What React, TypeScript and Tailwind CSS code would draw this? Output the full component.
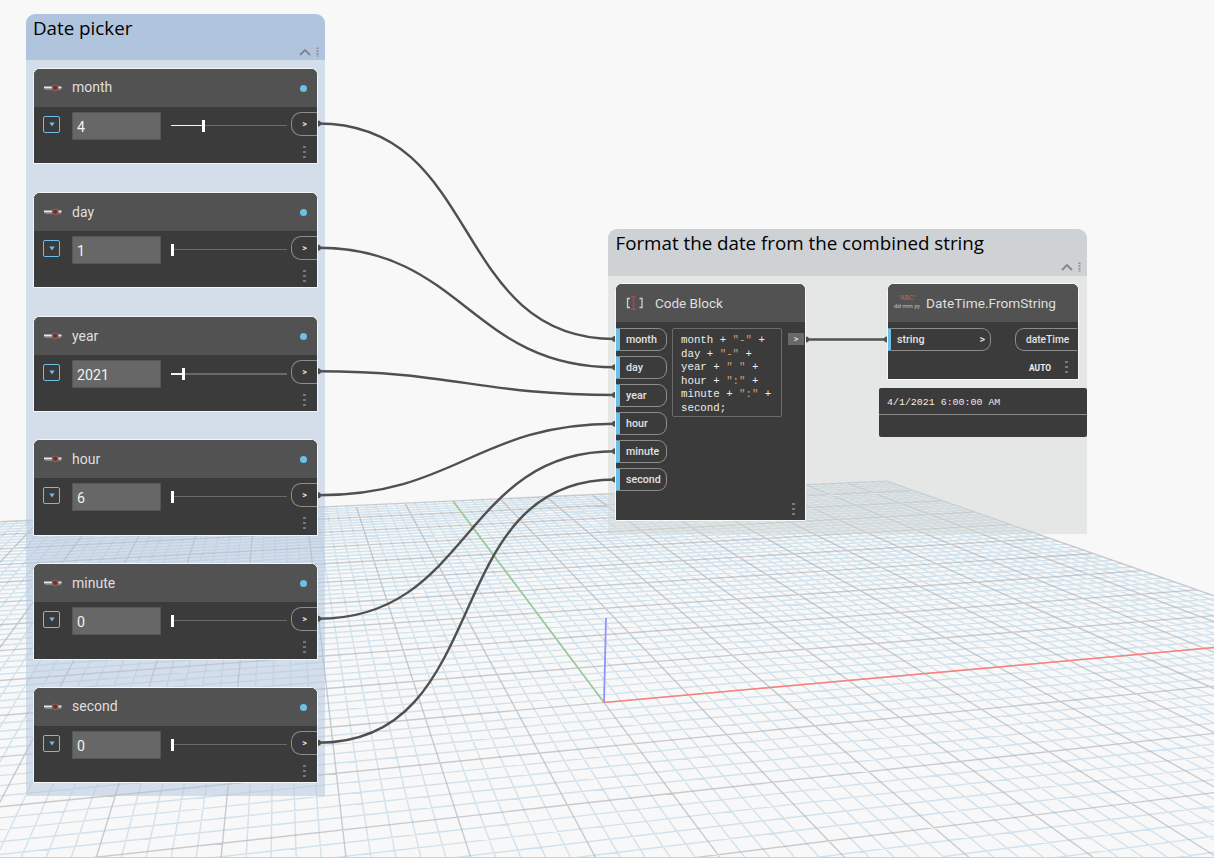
import React from "react";

type Pt = [number, number];

const depth = (u: number, v: number) => 1 + 0.0182 * u + 0.0865 * v;

const project = (u: number, v: number): Pt => {
  const w = depth(u, v);
  return [604 + (86 * u - 28.16 * v) / w, 702.5 + (-7.74 * u - 37.58 * v) / w];
};

const NEAR = 0.25;

function segment(a: Pt, b: Pt): string {
  const wa = depth(a[0], a[1]);
  const wb = depth(b[0], b[1]);
  if (wa < NEAR && wb < NEAR) return "";
  let start = a;
  if (wa < NEAR) {
    const t = (NEAR - wa) / (wb - wa);
    start = [a[0] + (b[0] - a[0]) * t, a[1] + (b[1] - a[1]) * t];
  }
  const p = project(start[0], start[1]);
  const q = project(b[0], b[1]);
  return `M${p[0].toFixed(1)} ${p[1].toFixed(1)}L${q[0].toFixed(1)} ${q[1].toFixed(1)}`;
}

function gridPath(major: boolean): string {
  let d = "";
  for (let i = -50; i <= 50; i++) {
    if ((i % 5 === 0) !== major) continue;
    const k = i / 5;
    d += segment([k, -10], [k, 10]);
    d += segment([-10, k], [10, k]);
  }
  return d;
}

function Ground() {
  const [gx, gy] = project(0, 10);
  const [rx, ry] = project(10, 0);
  return (
    <svg className="absolute inset-0" width="1214" height="858" fill="none">
      <path d={gridPath(false)} stroke="#a6c8de" strokeOpacity="0.46" strokeWidth="1.4" />
      <path d={gridPath(true)} stroke="#a4abb3" strokeOpacity="0.58" strokeWidth="1.4" />
      <path d={`M604 702.5L${gx} ${gy}`} stroke="#98cb9b" strokeWidth="1.6" />
      <path d={`M604 702.5L${rx} ${ry}`} stroke="#fb8080" strokeWidth="1.5" />
      <path d="M604 702.5L606 618" stroke="#9292fa" strokeWidth="1.8" />
      <path d="M0 857.5H1214" stroke="#cfd1d2" />
    </svg>
  );
}

const wires: [number, number, number, number][] = [
  [318, 123.5, 615, 339],
  [318, 247.8, 615, 367.3],
  [318, 371.3, 615, 395],
  [318, 495.3, 615, 423.7],
  [318, 618.8, 615, 451.3],
  [318, 742.8, 615, 479.5],
  [806, 339.5, 887, 339.5],
];

function Wires() {
  return (
    <svg className="absolute inset-0" width="1214" height="858" fill="none">
      {wires.map(([x1, y1, x2, y2], i) => {
        const c = 0.45 * Math.hypot(x2 - x1, y2 - y1);
        return (
          <g key={i}>
            <path
              d={`M${x1} ${y1}C${x1 + c} ${y1} ${x2 - c} ${y2} ${x2} ${y2}`}
              stroke="#505050"
              strokeWidth="2.4"
            />
            <path d={`M${x1} ${y1 - 3}a3 3 0 0 1 0 6z`} fill="#505050" />
            <path d={`M${x2} ${y2 - 3}a3 3 0 0 0 0 6z`} fill="#505050" />
          </g>
        );
      })}
    </svg>
  );
}

function Dots({ className = "" }: { className?: string }) {
  return (
    <div className={`flex flex-col gap-[3px] ${className}`}>
      <i className="h-[2px] w-[3px] bg-[#787878]" />
      <i className="h-[2px] w-[3px] bg-[#787878]" />
      <i className="h-[2px] w-[3px] bg-[#787878]" />
    </div>
  );
}

function GroupTools() {
  return (
    <svg width="23" height="10" viewBox="0 0 23 10" fill="none">
      <path d="M1 8L6 3L11 8" stroke="#858585" strokeWidth="1.9" />
      <path d="M18.5 .5V9.5" stroke="#8b8b8b" strokeWidth="2" strokeDasharray="1.5 1.2" />
    </svg>
  );
}

function SliderIcon() {
  return (
    <svg width="18" height="8" viewBox="0 0 18 8" fill="none">
      <path d="M0 3.5H8M14 3.5H17.5" stroke="#e8e8e8" strokeWidth="1.8" />
      <path d="M1.5 5.6H17.5" stroke="#b5b5b5" strokeWidth="1" strokeDasharray="1 1" />
      <circle cx="11.2" cy="3.8" r="2.8" fill="#494040" stroke="#a85350" strokeWidth="1.2" />
    </svg>
  );
}

interface SliderProps {
  name: string;
  value: string;
  box: string;
  fill: string;
  raised?: boolean;
  thick?: boolean;
}

function SliderNode({ name, value, box, fill, raised, thick }: SliderProps) {
  return (
    <section
      className={`absolute left-[33px] flex w-[285px] flex-col overflow-hidden rounded-t-[7px] border border-[#f4f6f8] bg-[#3b3b3b] ${box}`}
    >
      <header className="flex h-[38px] shrink-0 items-center bg-[#525252] px-[10px]">
        <SliderIcon />
        <span
          className={`ml-[10px] flex-1 text-[14px] leading-none text-[#dfdfdf] ${raised ? "pb-[2px]" : ""}`}
        >
          {name}
        </span>
        <i className="h-[7px] w-[7px] rounded-full bg-[#6ac0e7]" />
      </header>
      <div className="flex items-start pt-[5px]">
        <div className="ml-[9px] mt-[4px] flex h-[17px] w-[17px] items-center justify-center rounded-[2px] border border-[#6ac0e7]">
          <svg width="6" height="5" viewBox="0 0 6 5">
            <path d="M.3 .5H5.7L3 4.5z" fill="#6ac0e7" />
          </svg>
        </div>
        <div className="ml-[12px] flex h-[28px] w-[89px] items-center border border-[#565656] bg-[#676767] pl-[4px] pt-[3px] text-[14.2px] leading-none text-[#f3f3f3]">
          {value}
        </div>
        <div className="ml-[10px] mt-[7px] flex h-[13px] w-[116px] items-center">
          <i className={`bg-[#f5f5f5] ${fill} ${thick ? "h-[2px]" : "h-px"}`} />
          <i className="h-[12px] w-[3px] bg-white" />
          <i className={`flex-1 bg-[#6b6b6b] ${thick ? "h-[2px]" : "h-px"}`} />
        </div>
        <div className="ml-[4px] flex h-[24px] w-[26px] items-center justify-center rounded-l-[10px] border border-r-0 border-[#8d8d8d] pt-px text-[9px] font-bold leading-none text-[#e5e5e5]">
          &gt;
        </div>
      </div>
      <Dots className="ml-[269px] mt-[6px]" />
    </section>
  );
}

function Port({ label }: { label: string }) {
  return (
    <div className="flex h-[23px] w-[51px] items-center rounded-r-[9px] border border-l-4 border-[#8d8d8d] border-l-[#6ac0e7] pl-[6px] pt-[1.5px] text-[10.7px] font-medium leading-none text-[#e2e2e2]">
      {label}
    </div>
  );
}

const S = ({ children }: { children: React.ReactNode }) => (
  <span className="text-[#d9a06b]">{children}</span>
);

function CodeBlockNode() {
  return (
    <section className="absolute left-[615px] top-[283px] flex h-[238px] w-[191px] flex-col overflow-hidden rounded-t-[7px] border border-[#f8f8f8] bg-[#3b3b3b]">
      <header className="flex h-[38px] shrink-0 items-center bg-[#525252] pl-[10px]">
        <svg width="18" height="14" viewBox="0 0 18 14" fill="none">
          <path d="M4 2.5H1.5V11.5H4M13.5 2.5H16V11.5H13.5" stroke="#cfcfcf" strokeWidth="1.3" />
          <path d="M5 .8H10M5 13.2H10M7.5 .8V13.2" stroke="#ad4744" strokeWidth="1.5" />
        </svg>
        <span className="ml-[11px] pt-px text-[13.5px] leading-none text-[#dfdfdf]">Code Block</span>
      </header>
      <div className="flex pt-[6px]">
        <div className="flex flex-col gap-[5px]">
          <Port label="month" />
          <Port label="day" />
          <Port label="year" />
          <Port label="hour" />
          <Port label="minute" />
          <Port label="second" />
        </div>
        <pre className="ml-[5px] h-[89px] w-[110px] rounded-[2px] border border-[#6b6b6b] pl-[8px] pt-[5px] font-['Liberation_Mono',monospace] text-[10.75px] leading-[13.6px] text-[#ececec]">
          month + <S>"-"</S> +{"\n"}day + <S>"-"</S> +{"\n"}year + <S>" "</S> +{"\n"}hour +{" "}
          <S>":"</S> +{"\n"}minute + <S>":"</S> +{"\n"}second;
        </pre>
        <div className="ml-[6px] mt-[5px] flex h-[12px] w-[16px] items-center justify-center bg-[#696969] pt-px text-[9px] font-medium leading-none text-[#e5e5e5]">
          &gt;
        </div>
      </div>
      <Dots className="ml-[176px] mt-[12px]" />
    </section>
  );
}

function DateTimeNode() {
  return (
    <section className="absolute left-[887px] top-[283px] flex h-[97px] w-[192px] flex-col overflow-hidden rounded-t-[7px] border border-[#f8f8f8] bg-[#3b3b3b]">
      <header className="flex h-[38px] shrink-0 items-center bg-[#525252] pl-[6px]">
        <div className="flex w-[26px] flex-col items-center pb-[2px] text-[6px] leading-[8px]">
          <span className="text-[6.8px] text-[#b06a68]">"ABC"</span>
          <span className="whitespace-nowrap text-[#c4c4c4]">dd mm yy</span>
        </div>
        <span className="ml-[6px] pt-px text-[13.7px] leading-none text-[#dfdfdf]">
          DateTime.FromString
        </span>
      </header>
      <div className="flex justify-between pt-[6px] text-[10.7px] font-medium leading-none text-[#e2e2e2]">
        <div className="flex h-[23px] w-[103px] items-center justify-between rounded-r-[9px] border border-l-[3px] border-[#8d8d8d] border-l-[#6ac0e7] pl-[6px] pr-[5px] pt-[1.5px]">
          <span>string</span>
          <span>&gt;</span>
        </div>
        <div className="mr-px flex h-[23px] w-[62px] items-center rounded-l-[9px] border border-r-0 border-[#8d8d8d] pl-[10px] pt-[1.5px] text-[10.2px]">
          dateTime
        </div>
      </div>
      <div className="flex items-center justify-end pr-[10px] pt-[10px]">
        <span className="mr-[14px] pt-[2px] text-[8.4px] font-bold leading-none text-[#f0f0f0]">AUTO</span>
        <Dots />
      </div>
    </section>
  );
}

export default function App() {
  return (
    <main className="relative h-[858px] w-[1214px] overflow-hidden bg-[#f8f8f8] font-['Roboto',sans-serif]">
      <Ground />
      <div className="absolute left-[26px] top-[14px] flex h-[782px] w-[299px] flex-col overflow-hidden rounded-t-[9px]">
        <header className="flex h-[46px] flex-col justify-between bg-[#b1c4dd] pb-[3px] pl-[7px] pr-[3px] pt-[4px] font-['Open_Sans',sans-serif]">
          <span className="whitespace-nowrap text-[18.75px] leading-[20px] text-black">Date picker</span>
          <div className="flex justify-end">
            <GroupTools />
          </div>
        </header>
        <div className="flex-1 bg-[#b0c4dc]/50" />
      </div>
      <div className="absolute left-[608px] top-[229px] flex h-[305px] w-[479px] flex-col overflow-hidden rounded-t-[9px]">
        <header className="flex h-[47px] flex-col justify-between bg-[#ced2d5] pb-[4px] pl-[7.5px] pr-[3px] pt-[4px] font-['Open_Sans',sans-serif]">
          <span className="whitespace-nowrap text-[18.75px] leading-[20px] text-black">
            Format the date from the combined string
          </span>
          <div className="flex justify-end">
            <GroupTools />
          </div>
        </header>
        <div className="flex-1 bg-[#d2d6d4]/50" />
      </div>
      <Wires />
      <SliderNode name="month" value="4" box="top-[68px] h-[96px]" fill="w-[31px]" raised />
      <SliderNode name="day" value="1" box="top-[192px] h-[96px]" fill="w-0" />
      <SliderNode name="year" value="2021" box="top-[316px] h-[96px]" fill="w-[11px]" thick />
      <SliderNode name="hour" value="6" box="top-[439px] h-[97px]" fill="w-0" />
      <SliderNode name="minute" value="0" box="top-[563px] h-[97px]" fill="w-0" />
      <SliderNode name="second" value="0" box="top-[687px] h-[96px]" fill="w-0" raised />
      <CodeBlockNode />
      <DateTimeNode />
      <div className="absolute left-[879px] top-[388px] flex h-[49px] w-[208px] flex-col rounded-[2px] bg-[#3b3b3b]">
        <div className="flex h-[27px] items-center border-b border-[#8a8a8a] pl-[8px] pt-[4px] font-['Liberation_Mono',monospace] text-[9.95px] leading-none text-[#ececec]">
          4/1/2021 6:00:00 AM
        </div>
      </div>
    </main>
  );
}
